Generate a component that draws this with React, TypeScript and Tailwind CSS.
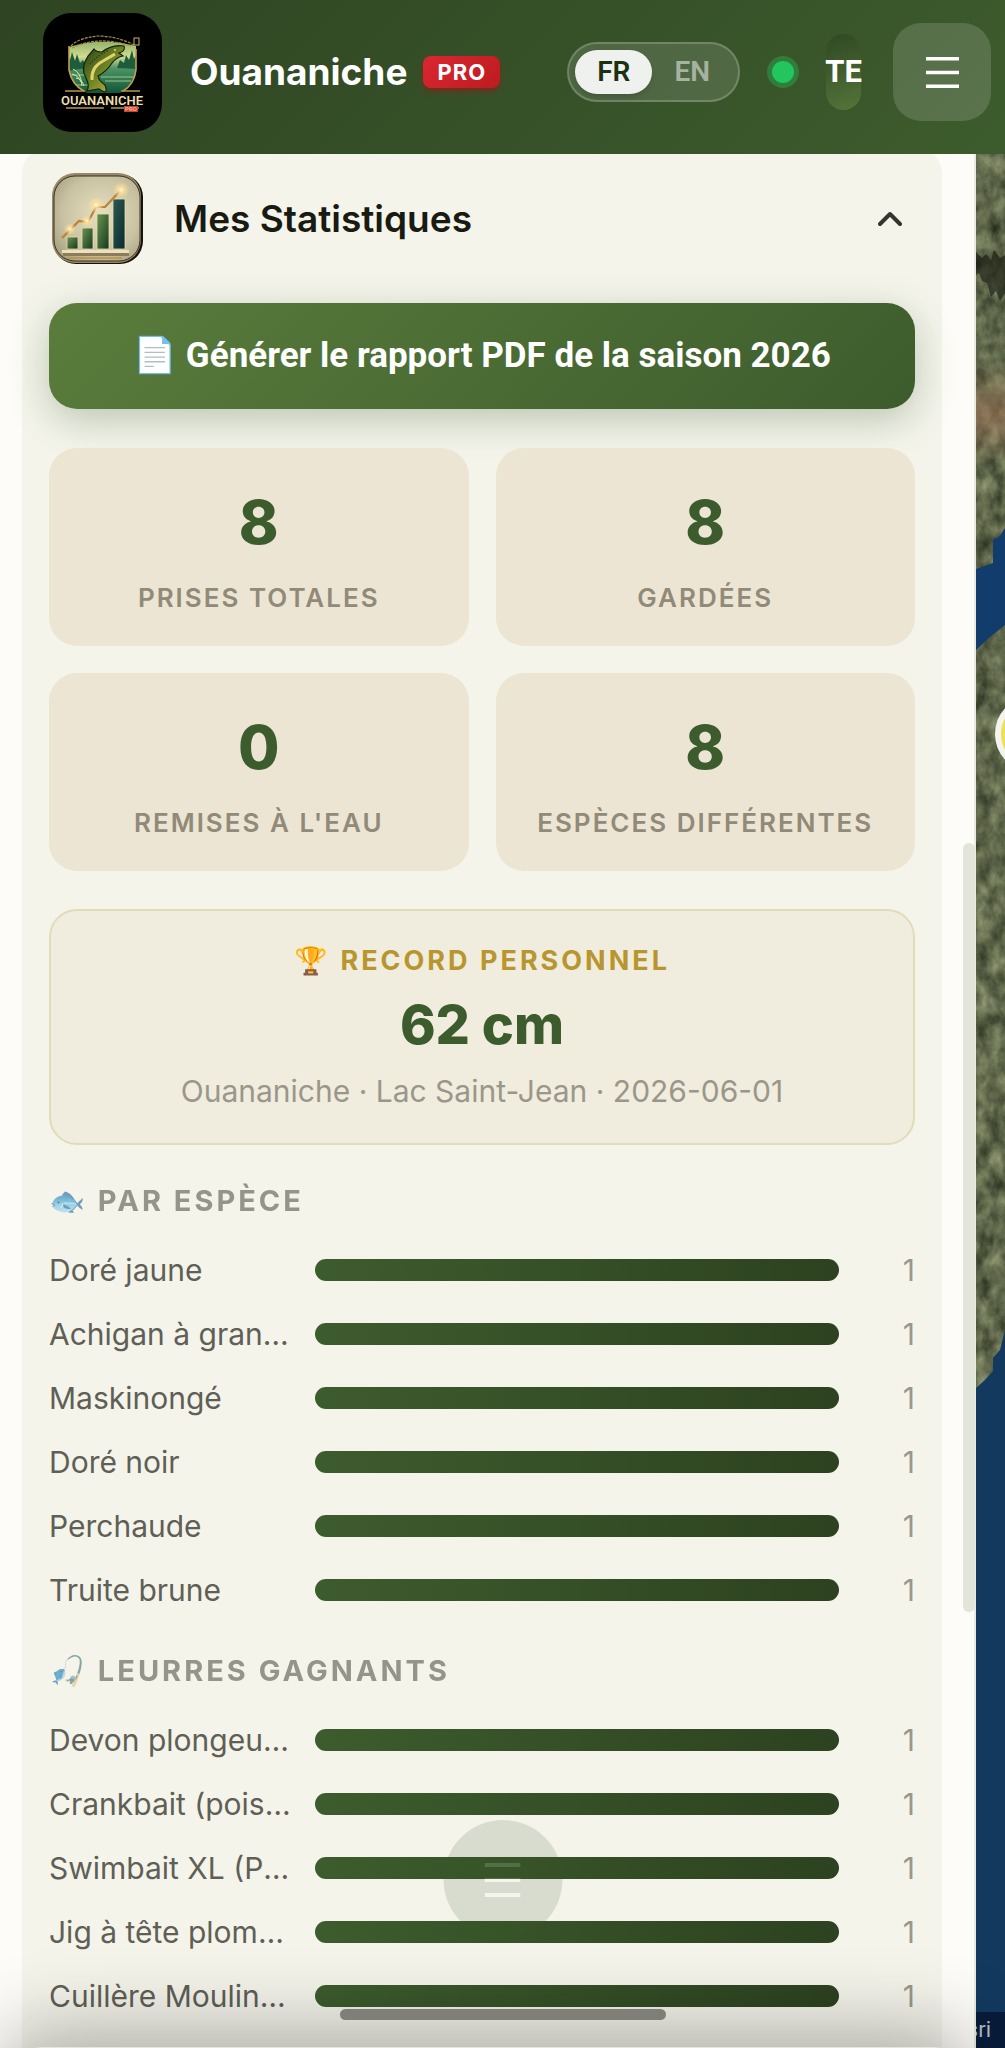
import { useState } from "react";

const SPECIES = [
  { name: "Doré jaune", count: 1 },
  { name: "Achigan à grande bouche", count: 1 },
  { name: "Maskinongé", count: 1 },
  { name: "Doré noir", count: 1 },
  { name: "Perchaude", count: 1 },
  { name: "Truite brune", count: 1 },
];

const LURES = [
  { name: "Devon plongeur articulé", count: 1 },
  { name: "Crankbait (poisson nageur)", count: 1 },
  { name: "Swimbait XL (Pike)", count: 1 },
  { name: "Jig à tête plombée", count: 1 },
  { name: "Cuillère Moulinante", count: 1 },
];

const TOTALS = [
  { label: "Prises totales", value: 8 },
  { label: "Gardées", value: 8 },
  { label: "Remises à l'eau", value: 0 },
  { label: "Espèces différentes", value: 8 },
];

function Logo() {
  return (
    <svg viewBox="0 0 119 119" className="size-[119px] shrink-0 rounded-[28px]" role="img" aria-label="Ouananiche Pro">
      <defs>
        <linearGradient id="lake" x1="0" y1="0" x2="0" y2="1">
          <stop offset="0" stopColor="#7fa860" />
          <stop offset="0.35" stopColor="#d3dc93" />
          <stop offset="0.55" stopColor="#4d9463" />
          <stop offset="1" stopColor="#0e5338" />
        </linearGradient>
        <linearGradient id="fish" x1="0" y1="0" x2="1" y2="1">
          <stop offset="0" stopColor="#243f17" />
          <stop offset="0.5" stopColor="#6f8424" />
          <stop offset="1" stopColor="#dcc552" />
        </linearGradient>
        <clipPath id="shield">
          <path d="M26 34 Q58 24 93 33 V60 Q91 72 77 80 H44 Q29 74 26 58 Z" />
        </clipPath>
      </defs>
      <rect width="119" height="119" fill="#000" />
      <g clipPath="url(#shield)">
        <rect x="24" y="24" width="70" height="57" fill="url(#lake)" />
        <path d="M24 58 V42 l3 5 2-8 3 9 2-7 3 9 3-3 3 8z M94 56 V40 l-3 6-2-9-3 10-3-5-2 8-4-3-3 8z" fill="#1f5c3c" />
        <path d="M24 62 h18 M58 64 h34 M62 68 h26 M28 72 h20" stroke="#9cc58a" strokeWidth="1" />
      </g>
      <path d="M26 33 V57 Q29 72 41 78 M93 36 V57 Q91 72 80 78" fill="none" stroke="#bfa24e" strokeWidth="1.6" />
      <path d="M28 33 Q35 25 55 23 Q74 23 91 32 M29 35 Q55 22 88 33" fill="none" stroke="#a78f45" strokeWidth="1.2" strokeDasharray="3 1" />
      <path
        d="M81 33 Q69 31 59 39 Q53 39 51 36 L45 43 Q37 55 43 65 Q47 73 44 78 L56 76 Q66 83 62 72 Q56 68 55 63 Q64 58 69 50 Q74 44 80 43 L76 40 Q83 38 81 33Z"
        fill="url(#fish)"
        stroke="#14210c"
        strokeWidth="1.2"
      />
      <path d="M49 67 Q48 54 60 48 Q67 44 72 41" stroke="#e3d26c" strokeWidth="3" fill="none" />
      <path d="M47 51 Q55 42 66 37" stroke="#203715" strokeWidth="1.5" strokeDasharray="1 2" fill="none" />
      <circle cx="72" cy="37" r="1" fill="#e9dc8a" />
      <path d="M30 56 q8 3 9 17 M33 65 q6 1 8 8 M29 61 q7 2 9 8" stroke="#d9e6a8" strokeWidth="1" fill="none" />
      <rect x="91" y="25" width="5" height="7" fill="none" stroke="#c9b562" />
      <path d="M22 78 H42 M78 78 H97 M23 95 H61 M68 95 H96" stroke="#b89a45" strokeWidth="1.5" />
      <text x="59" y="92" textAnchor="middle" fill="#eadfae" className="font-[Roboto,sans-serif] text-[13px] font-semibold">
        OUANANICHE
      </text>
      <rect x="81" y="93" width="14" height="6" fill="#c8432c" />
      <text x="88" y="98" textAnchor="middle" fill="#f2b8a0" className="font-[Roboto,sans-serif] text-[6px] font-bold">
        PRO
      </text>
    </svg>
  );
}

function ChartIcon() {
  return (
    <svg viewBox="0 0 91 91" className="size-[91px] shrink-0" aria-hidden="true">
      <defs>
        <radialGradient id="paper" cx="0.55" cy="0.45" r="0.75">
          <stop offset="0" stopColor="#e6dfc0" />
          <stop offset="0.6" stopColor="#c9c2a2" />
          <stop offset="1" stopColor="#9b9577" />
        </radialGradient>
        <linearGradient id="barGreen" x1="0" y1="0" x2="1" y2="1">
          <stop offset="0" stopColor="#6c9450" />
          <stop offset="1" stopColor="#14391d" />
        </linearGradient>
        <linearGradient id="barTeal" x1="0" y1="0" x2="1" y2="1">
          <stop offset="0" stopColor="#2e5a50" />
          <stop offset="1" stopColor="#082a30" />
        </linearGradient>
        <radialGradient id="spark">
          <stop offset="0" stopColor="#fffbe6" />
          <stop offset="0.4" stopColor="#ffdf94" stopOpacity="0.8" />
          <stop offset="1" stopColor="#ffe3a0" stopOpacity="0" />
        </radialGradient>
      </defs>
      <rect x="1" y="1" width="90" height="90" rx="23" fill="#15120a" />
      <rect x="0" y="0" width="89" height="90" rx="23" fill="#97886a" />
      <rect x="2" y="3" width="86" height="85" rx="21" fill="url(#paper)" stroke="#3b3220" />
      <path d="M16 85 H70" stroke="#c2903f" strokeWidth="1.5" />
      <g stroke="#e9dcb0" strokeWidth="0.8">
        <rect x="15" y="64" width="11" height="12" fill="url(#barGreen)" />
        <rect x="30" y="55" width="11" height="21" fill="url(#barGreen)" />
        <rect x="45" y="41" width="12" height="35" fill="url(#barGreen)" />
        <rect x="61" y="26" width="12" height="50" fill="url(#barTeal)" />
      </g>
      <rect x="10" y="77" width="67" height="3" fill="#eee0bd" />
      <rect x="11" y="80" width="66" height="3" fill="#8b7c5c" />
      <path d="M10 65 L18 57 L27 48 L36 49 L44 34 L53 34 L69 17" fill="none" stroke="#bd8233" strokeWidth="2.2" />
      <circle cx="18" cy="56" r="6" fill="url(#spark)" />
      <circle cx="35" cy="48" r="6" fill="url(#spark)" />
      <circle cx="44" cy="32" r="8" fill="url(#spark)" />
      <circle cx="69" cy="17" r="8" fill="url(#spark)" />
    </svg>
  );
}

function MenuLines({ className }: { className: string }) {
  return (
    <svg viewBox="0 0 36 36" className={className} stroke="currentColor" strokeWidth="4" aria-hidden="true">
      <path d="M0 3 H36 M0 18 H36 M0 33 H36" />
    </svg>
  );
}

function Header() {
  const [lang, setLang] = useState("FR");

  return (
    <header className="z-10 flex h-[154px] shrink-0 items-center bg-linear-135 from-[#2e4422] to-[#3d5c2d] pr-3.5 pb-2.5 pl-[43px] font-[Roboto,sans-serif] text-white">
      <Logo />
      <h1 className="ml-7 font-[Inter,sans-serif] text-[37px] leading-12 font-bold">Ouananiche</h1>
      <span className="ml-4 rounded-lg bg-linear-135 from-[#dc2630] to-[#bb1c20] px-3.5 font-[Inter,sans-serif] text-[22px] leading-8 font-bold tracking-[1px] shadow-md shadow-red-700/40">
        PRO
      </span>
      <div className="ml-auto flex items-center gap-8">
        <div className="flex rounded-full border-2 border-white/20 bg-white/12 p-1.5">
          {["FR", "EN"].map((code) => (
            <button
              key={code}
              type="button"
              aria-pressed={lang === code}
              onClick={() => setLang(code)}
              className={
                lang === code
                  ? "h-11 rounded-full bg-[#eff1ee] px-[22px] text-[28px] font-semibold text-[#1c3012] shadow-md"
                  : "h-11 rounded-full px-[22px] text-[28px] font-semibold text-white/50"
              }
            >
              {code}
            </button>
          ))}
        </div>
        <span className="size-[22px] rounded-full bg-[#22c55e] ring-5 ring-[#22c55e]/35" />
        <button
          type="button"
          aria-label="Compte"
          className="flex h-[76px] w-[35px] items-center justify-center rounded-full bg-linear-160 from-[#2f4823] to-[#55753a] text-[31px] font-bold"
        >
          TE
        </button>
        <button
          type="button"
          aria-label="Menu"
          className="flex size-[98px] items-center justify-center rounded-[28px] bg-white/15"
        >
          <MenuLines className="size-[33px]" />
        </button>
      </div>
    </header>
  );
}

function BarList({ title, rows }: { title: string; rows: { name: string; count: number }[] }) {
  const max = Math.max(...rows.map((r) => r.count));

  return (
    <section className="mt-9 pb-[5px]">
      <h3 className="text-[29px] leading-10 font-bold tracking-[3px] text-[#55554c] uppercase opacity-60">{title}</h3>
      <ul className="mt-[29px] flex flex-col gap-6">
        {rows.map((row) => (
          <li key={row.name} className="flex items-center gap-6 text-[30px] leading-10">
            <span className="w-[242px] shrink-0 truncate text-[#5f5f56]">{row.name}</span>
            <div className="h-[22px] flex-1">
              <div
                className="h-full rounded-full bg-linear-to-r from-[#3d5c2d] to-[#2d4220]"
                style={{ width: `${(row.count / max) * 100}%` }}
              />
            </div>
            <span className="w-[52px] text-right text-[#9a978d]">{row.count}</span>
          </li>
        ))}
      </ul>
    </section>
  );
}

function StatsPanel() {
  const [open, setOpen] = useState(true);

  return (
    <div className="min-w-0 flex-1 overflow-hidden border-r-2 border-[#e9ebe0] bg-[#fdfcf8] pr-8 pl-[22px]">
      <section className="-mt-2 rounded-[28px] bg-[#f4f4eb] px-[27px] pt-[27px] pb-20">
        <button
          type="button"
          aria-expanded={open}
          onClick={() => setOpen(!open)}
          className="flex w-full items-center gap-[31px] px-[3px] text-left"
        >
          <ChartIcon />
          <span className="flex-1 text-[37px] leading-12 font-semibold text-[#191a12]">Mes Statistiques</span>
          <svg
            viewBox="0 0 24 24"
            className="mr-2.5 size-6"
            fill="none"
            stroke="#34352d"
            strokeWidth="4"
            strokeLinecap="round"
            strokeLinejoin="round"
            aria-hidden="true"
          >
            <path d="M2 17 L12 7 L22 17" />
          </svg>
        </button>

        {open && (
          <>
            <button
              type="button"
              className="mt-[39px] h-[106px] w-full rounded-[28px] bg-linear-135 from-[#5a7d3c] to-[#3d5c2d] font-[Roboto,sans-serif] text-[35px] font-bold text-white shadow-[0_11px_38px_rgba(61,92,45,0.3)]"
            >
              📄 Générer le rapport PDF de la saison 2026
            </button>

            <dl className="relative mt-[39px] grid grid-cols-2 gap-[27px]">
              {TOTALS.map((t) => (
                <div
                  key={t.label}
                  className="flex h-[198px] flex-col-reverse items-center justify-center gap-[22px] rounded-[28px] bg-[#ece5d3] pt-2"
                >
                  <dt className="text-[26px] leading-9 font-semibold tracking-[2px] text-[#918a79] uppercase">{t.label}</dt>
                  <dd className="text-[60px] leading-18 font-extrabold text-[#3d5c2d]">{t.value}</dd>
                </div>
              ))}
            </dl>

            <div className="mt-[38px] flex h-[236px] flex-col items-center justify-center rounded-[28px] border-2 border-[#e1dcb8] bg-[#f0edde]">
              <h3 className="text-[27px] leading-9 font-bold tracking-[3px] text-[#b8962f] uppercase">🏆 Record personnel</h3>
              <p className="mt-2.5 text-[54px] leading-18 font-extrabold text-[#3d5c2d]">62 cm</p>
              <p className="mt-2.5 text-[30px] leading-10 text-[#9a978a]">Ouananiche · Lac Saint-Jean · 2026-06-01</p>
            </div>

            <BarList title="🐟 Par espèce" rows={SPECIES} />
            <BarList title="🎣 Leurres gagnants" rows={LURES} />
          </>
        )}
      </section>
    </div>
  );
}

function MapStrip() {
  return (
    <div className="relative w-[29px] shrink-0 overflow-hidden bg-[#5c6647]">
      <svg viewBox="0 0 29 1894" preserveAspectRatio="xMinYMin slice" className="h-full w-full" aria-hidden="true">
        <defs>
          <filter id="terrain" x="0" y="0" width="100%" height="100%" colorInterpolationFilters="sRGB">
            <feTurbulence type="fractalNoise" baseFrequency="0.07 0.05" numOctaves="6" seed="8" />
            <feColorMatrix values="0.5 0.1 0 0 0.07  0.5 0.1 0 0 0.1  0.4 0.1 0 0 0.04  0 0 0 0 1" />
          </filter>
          <linearGradient id="clay" x1="0" y1="0" x2="0" y2="1">
            <stop offset="0" stopColor="#a5785a" stopOpacity="0" />
            <stop offset="0.5" stopColor="#a5785a" stopOpacity="0.6" />
            <stop offset="1" stopColor="#a5785a" stopOpacity="0" />
          </linearGradient>
        </defs>
        <rect width="29" height="1300" filter="url(#terrain)" />
        <rect y="210" width="29" height="100" fill="url(#clay)" />
        <path d="M0 98 l6 6 4-4 5 6 3-10 6 8 5-3 v38 l-5 8-4-10-5 6-4-14-5-2-3-8-3 2z" fill="#15170f" opacity="0.6" />
        <path d="M0 415 L17 409 V386 L24 382 L29 374 V471 L14 483 L0 496Z" fill="#123c6c" />
        <path d="M0 1234 L9 1226 L17 1217 V1204 L24 1196 L29 1176 V1894 H0Z" fill="#13395f" />
        <circle cx="57" cy="580" r="35" fill="#ecdf5e" stroke="#f4f4ee" strokeWidth="6" />
      </svg>
      <a href="#esri" className="absolute right-0 bottom-0 bg-[#081c3a] pr-3.5 pl-2 font-[Roboto,sans-serif] text-[22px] leading-9 text-[#b4bcc6]">
        Esri
      </a>
    </div>
  );
}

export default function App() {
  return (
    <div className="relative flex h-screen flex-col overflow-hidden font-[Inter,sans-serif]">
      <Header />
      <main className="relative flex min-h-0 flex-1">
        <StatsPanel />
        <MapStrip />
        {/* scrollbar thumb of the side panel */}
        <div className="absolute top-[689px] right-[30px] h-[769px] w-3 rounded-md bg-[#e1e5da]" />
      </main>

      {/* bottom sheet, closed: only its top edge and shadow show */}
      <div className="pointer-events-none absolute top-[calc(100%-1px)] right-[29px] left-0 h-64 rounded-t-[44px] bg-[#e6e6e0] shadow-[0_-16px_80px_rgba(0,0,0,0.3)]" />

      <button
        type="button"
        aria-label="Ouvrir le menu rapide"
        className="absolute bottom-[109px] left-1/2 flex size-[119px] -translate-x-1/2 items-center justify-center rounded-full bg-[#3d5c2d] text-white opacity-15"
      >
        <MenuLines className="size-9" />
      </button>
      <div className="absolute bottom-7 left-1/2 h-[11px] w-[326px] -translate-x-1/2 rounded-full bg-[#7f7f78]" />
    </div>
  );
}
